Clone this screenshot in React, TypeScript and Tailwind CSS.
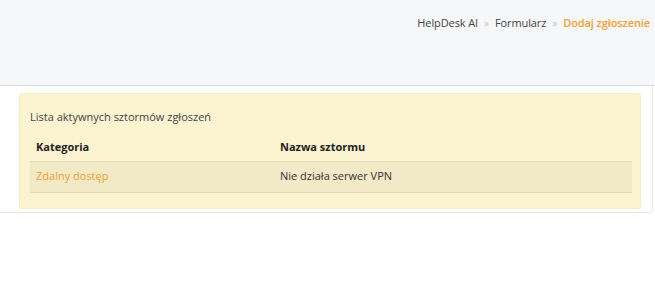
export default function App() {
  return (
    <div className="w-[655px] h-[305px] bg-white font-['Open_Sans',sans-serif] text-[#333] overflow-hidden">
      <div className="h-[86px] bg-[#f6f7f9] border-b border-[#d9dbe0] flex justify-end pt-[15px] pr-[5px]">
        <nav className="flex items-start gap-[6px] text-[11px] leading-[15px] tracking-[-0.1px]">
          <span className="text-[#444]">HelpDesk AI</span>
          <span className="text-[#c4c4c4] text-[10px] leading-[16px]">»</span>
          <span className="text-[#444]">Formularz</span>
          <span className="text-[#c4c4c4] text-[10px] leading-[16px]">»</span>
          <span className="text-[#f0a030] font-semibold">Dodaj zgłoszenie</span>
        </nav>
      </div>
      <div className="pr-[2px]">
        <div className="bg-white border-r border-b border-[#e6e6e6] rounded-br-[4px] pt-[7px] pb-[3px] pl-[19px] pr-[11px]">
          <div className="bg-[#fcf3d0] border border-[#f6ecc4] rounded-[3px] pl-[10px] pr-[8px] pt-[15px] pb-[15px]">
            <div className="text-[11px] leading-[16px] text-[#444]">Lista aktywnych sztormów zgłoszeń</div>
            <table className="w-full mt-[14px] text-[11px] border-collapse">
              <thead>
                <tr className="border-b border-[#e3d9b4]">
                  <th className="text-left font-bold pl-[6px] pb-[5px] w-[250px] text-[#222]">Kategoria</th>
                  <th className="text-left font-bold pb-[5px] text-[#222]">Nazwa sztormu</th>
                </tr>
              </thead>
              <tbody>
                <tr className="bg-[#f2e9c6] border-b border-[#e3d9b4]">
                  <td className="pl-[6px] h-[31px] text-[#f0a030]">Zdalny dostęp</td>
                  <td className="h-[31px] text-[#333]">Nie działa serwer VPN</td>
                </tr>
              </tbody>
            </table>
          </div>
        </div>
      </div>
    </div>
  );
}
